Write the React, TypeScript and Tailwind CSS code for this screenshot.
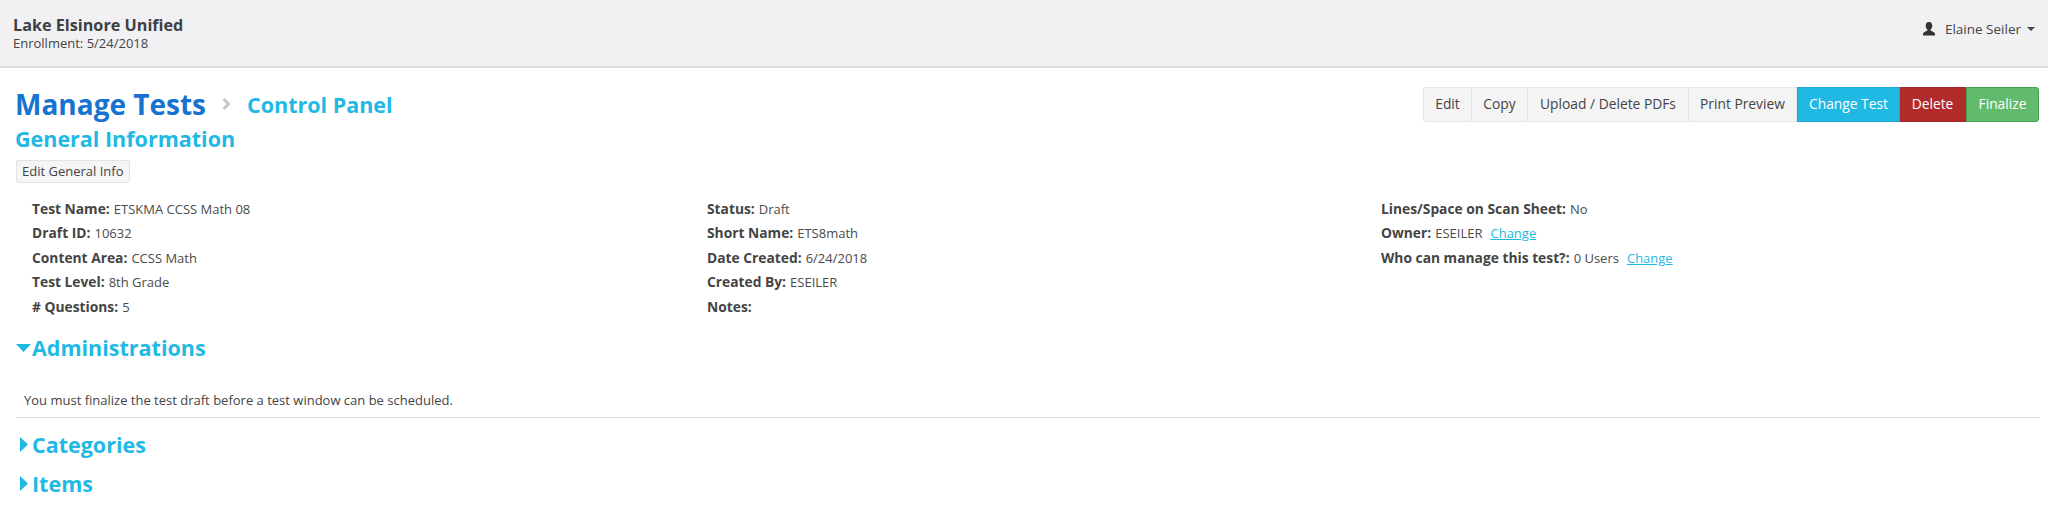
import React from "react";

const font = { fontFamily: '"Open Sans", sans-serif' };

function Field({ label, value, link }: { label: string; value?: string; link?: boolean }) {
  return (
    <div className="h-[24.4px] leading-[24px] whitespace-nowrap">
      <span className="font-bold text-[13.8px] text-[#444]">{label}</span>
      {value ? <span className="ml-[4px] text-[13px] text-[#4a4a4a]">{value}</span> : null}
      {link ? <a className="ml-[8px] text-[13px] text-[#1fb9e4] underline">Change</a> : null}
    </div>
  );
}

function Btn({ children, cls }: { children: React.ReactNode; cls: string }) {
  return <div className={"flex items-center justify-center h-full whitespace-nowrap text-[13.8px] border " + cls}>{children}</div>;
}

function Section({ label, open }: { label: string; open?: boolean }) {
  return (
    <div className="flex items-center h-[28px]">
      <div className="w-[16px] flex justify-start shrink-0">
        {open ? (
          <svg width="15" height="8" viewBox="0 0 15 8"><path d="M0 0H15L7.5 8Z" fill="#1fb9e4" /></svg>
        ) : (
          <svg width="8" height="15" viewBox="0 0 8 15" className="ml-[4px]"><path d="M0 0L8 7.5L0 15Z" fill="#1fb9e4" /></svg>
        )}
      </div>
      <span className="text-[21.5px] font-bold text-[#1fb9e4] leading-none">{label}</span>
    </div>
  );
}

export default function App() {
  return (
    <div style={font} className="w-[2048px] h-[528px] bg-white overflow-hidden text-[#444]">
      <header className="h-[68px] bg-[#f1f1f3] border-b-2 border-[#dddddd] flex justify-between pl-[13px] pr-[13px]">
        <div className="pt-[15px]">
          <div className="text-[16.2px] font-bold leading-[20px] text-[#3d3f45]">Lake Elsinore Unified</div>
          <div className="text-[13px] leading-[16px] text-[#444]">Enrollment: 5/24/2018</div>
        </div>
        <div className="flex items-center h-[58px] text-[13.5px] text-[#444]">
          <svg width="14" height="14" viewBox="0 0 14 14" className="mr-[9px]">
            <path d="M7 0C9.2 0 10.3 1.6 10.3 3.8C10.3 5.5 9.4 7 8.6 7.8V8.8C10.5 9.6 13 10.4 13 12V13.5H1V12C1 10.4 3.5 9.6 5.4 8.8V7.8C4.6 7 3.7 5.5 3.7 3.8C3.7 1.6 4.8 0 7 0Z" fill="#333" />
          </svg>
          <span>Elaine Seiler</span>
          <svg width="8" height="4" viewBox="0 0 8 4" className="ml-[6px]"><path d="M0 0H8L4 4Z" fill="#444" /></svg>
        </div>
      </header>

      <main className="px-[15px] relative">
        <div className="flex items-start justify-between pt-[18px] h-[60px]">
          <div className="flex items-center h-[36px]">
            <span className="text-[28px] font-bold text-[#1673cf] leading-none">Manage Tests</span>
            <svg width="9" height="12" viewBox="0 0 9 12" className="ml-[16px] mr-[16px]"><path d="M1.5 1L6.5 6L1.5 11" fill="none" stroke="#c8c8c8" strokeWidth="3" /></svg>
            <span className="text-[21.5px] font-bold text-[#1fb9e4] leading-none mt-[2px]">Control Panel</span>
          </div>
          <div className="flex h-[35px] mr-[-6px] mt-[1px]">
            <Btn cls="w-[49px] bg-[#f4f4f4] border-[#e6e6e6] rounded-l-[3px] text-[#444]">Edit</Btn>
            <Btn cls="w-[56px] bg-[#f4f4f4] border-[#e6e6e6] border-l-0 text-[#444]">Copy</Btn>
            <Btn cls="w-[161px] bg-[#f4f4f4] border-[#e6e6e6] border-l-0 text-[#444]">Upload / Delete PDFs</Btn>
            <Btn cls="w-[108px] bg-[#f4f4f4] border-[#e6e6e6] border-l-0 text-[#444]">Print Preview</Btn>
            <Btn cls="w-[103px] bg-[#1fb9e4] border-[#1fa5d8] text-white">Change Test</Btn>
            <Btn cls="w-[66px] bg-[#b12b2b] border-[#a52626] border-l-0 text-white">Delete</Btn>
            <Btn cls="w-[73px] bg-[#62bb6c] border-[#45a24f] rounded-r-[3px] text-white">Finalize</Btn>
          </div>
        </div>

        <div className="text-[21.5px] font-bold text-[#1fb9e4] leading-[28px] mt-[-3px]">General Information</div>
        <div className="mt-[7px] ml-[1px] inline-flex items-center h-[23px] px-[5px] bg-[#f5f5f5] border border-[#e3e3e3] rounded-[2px] text-[13px] text-[#444]">
          Edit General Info
        </div>

        <div className="grid grid-cols-[675px_674px_1fr] pl-[17px] mt-[13px]">
          <div>
            <Field label="Test Name:" value="ETSKMA CCSS Math 08" />
            <Field label="Draft ID:" value="10632" />
            <Field label="Content Area:" value="CCSS Math" />
            <Field label="Test Level:" value="8th Grade" />
            <Field label="# Questions:" value="5" />
          </div>
          <div>
            <Field label="Status:" value="Draft" />
            <Field label="Short Name:" value="ETS8math" />
            <Field label="Date Created:" value="6/24/2018" />
            <Field label="Created By:" value="ESEILER" />
            <Field label="Notes:" />
          </div>
          <div>
            <Field label="Lines/Space on Scan Sheet:" value="No" />
            <Field label="Owner:" value="ESEILER" link />
            <Field label="Who can manage this test?:" value="0 Users" link />
          </div>
        </div>

        <div className="mt-[16px] ml-[1px]">
          <Section label="Administrations" open />
        </div>
        <div className="mt-[26px] pl-[9px] text-[13px] leading-[24px] text-[#444]">
          You must finalize the test draft before a test window can be scheduled.
        </div>
        <div className="mt-[5px] ml-[1px] border-t border-[#dddddd] mr-[-7px]" />
        <div className="mt-[13px] ml-[1px]">
          <Section label="Categories" />
        </div>
        <div className="mt-[11px] ml-[1px]">
          <Section label="Items" />
        </div>
      </main>
    </div>
  );
}
